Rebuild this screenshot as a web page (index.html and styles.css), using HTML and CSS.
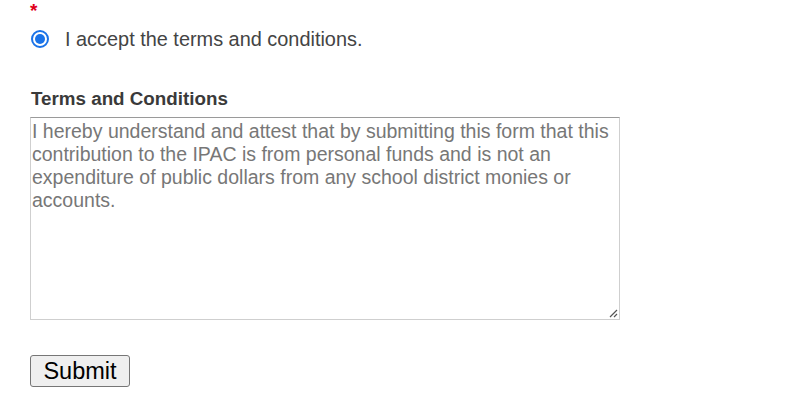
FILE: index.html
```html
<!DOCTYPE html>
<html lang="en">
<head>
<meta charset="utf-8">
<title>Terms</title>
<link rel="stylesheet" href="styles.css">
</head>
<body>
<form class="form">
  <div class="required">*</div>
  <label class="accept">
    <span class="radio"><span class="dot"></span></span>
    <span class="accept-text">I accept the terms and conditions.</span>
  </label>
  <div class="terms">
    <div class="terms-label">Terms and Conditions</div>
    <div class="terms-box">I hereby understand and attest that by submitting this form that this contribution to the IPAC is from personal funds and is not an expenditure of public dollars from any school district monies or accounts.<svg class="grip" width="10" height="10" viewBox="0 0 10 10"><path d="M9 2 L2 9 M9 6 L6 9" stroke="#555" stroke-width="1.2" fill="none"/></svg></div>
  </div>
  <div class="actions">
    <button type="button" class="submit">Submit</button>
  </div>
</form>
</body>
</html>
```

FILE: styles.css
```css
html, body {
  margin: 0;
  padding: 0;
  background: #fff;
}
body {
  font-family: "Liberation Sans", Arial, sans-serif;
}
.form {
  padding-left: 30px;
  display: flex;
  flex-direction: column;
}
.required {
  color: #e0001a;
  font-size: 19px;
  font-weight: bold;
  line-height: 22px;
  height: 12px;
  overflow: visible;
  padding-left: 0px;
}
.accept {
  display: flex;
  align-items: center;
  margin-top: 17px;
  height: 20px;
}
.radio {
  width: 18px;
  height: 18px;
  box-sizing: border-box;
  border: 2px solid #1a73e8;
  border-radius: 50%;
  display: flex;
  align-items: center;
  justify-content: center;
  margin-left: 1px;
}
.dot {
  width: 10px;
  height: 10px;
  border-radius: 50%;
  background: #1a73e8;
}
.accept-text {
  margin-left: 16px;
  font-size: 19.9px;
  color: #444;
}
.terms {
  margin-top: 39px;
}
.terms-label {
  font-size: 18.8px;
  font-weight: bold;
  color: #3a3a3a;
  line-height: 22px;
  padding-left: 1px;
  margin-bottom: 7px;
}
.terms-box {
  position: relative;
  width: 590px;
  height: 203px;
  box-sizing: border-box;
  border: 1px solid #cfcfcf;
  border-top-color: #9a9a9a;
  padding: 2px 1px 1px;
  font-size: 19.5px;
  line-height: 23px;
  color: #777;
}
.grip {
  position: absolute;
  right: 1px;
  bottom: 1px;
}
.actions {
  margin-top: 35px;
}
.submit {
  font-family: "Liberation Sans", Arial, sans-serif;
  font-size: 23.5px;
  height: 32px;
  width: 100px;
  padding: 0;
  background: #efefef;
  border: 1px solid #767676;
  border-radius: 3px;
  color: #000;
}
```
